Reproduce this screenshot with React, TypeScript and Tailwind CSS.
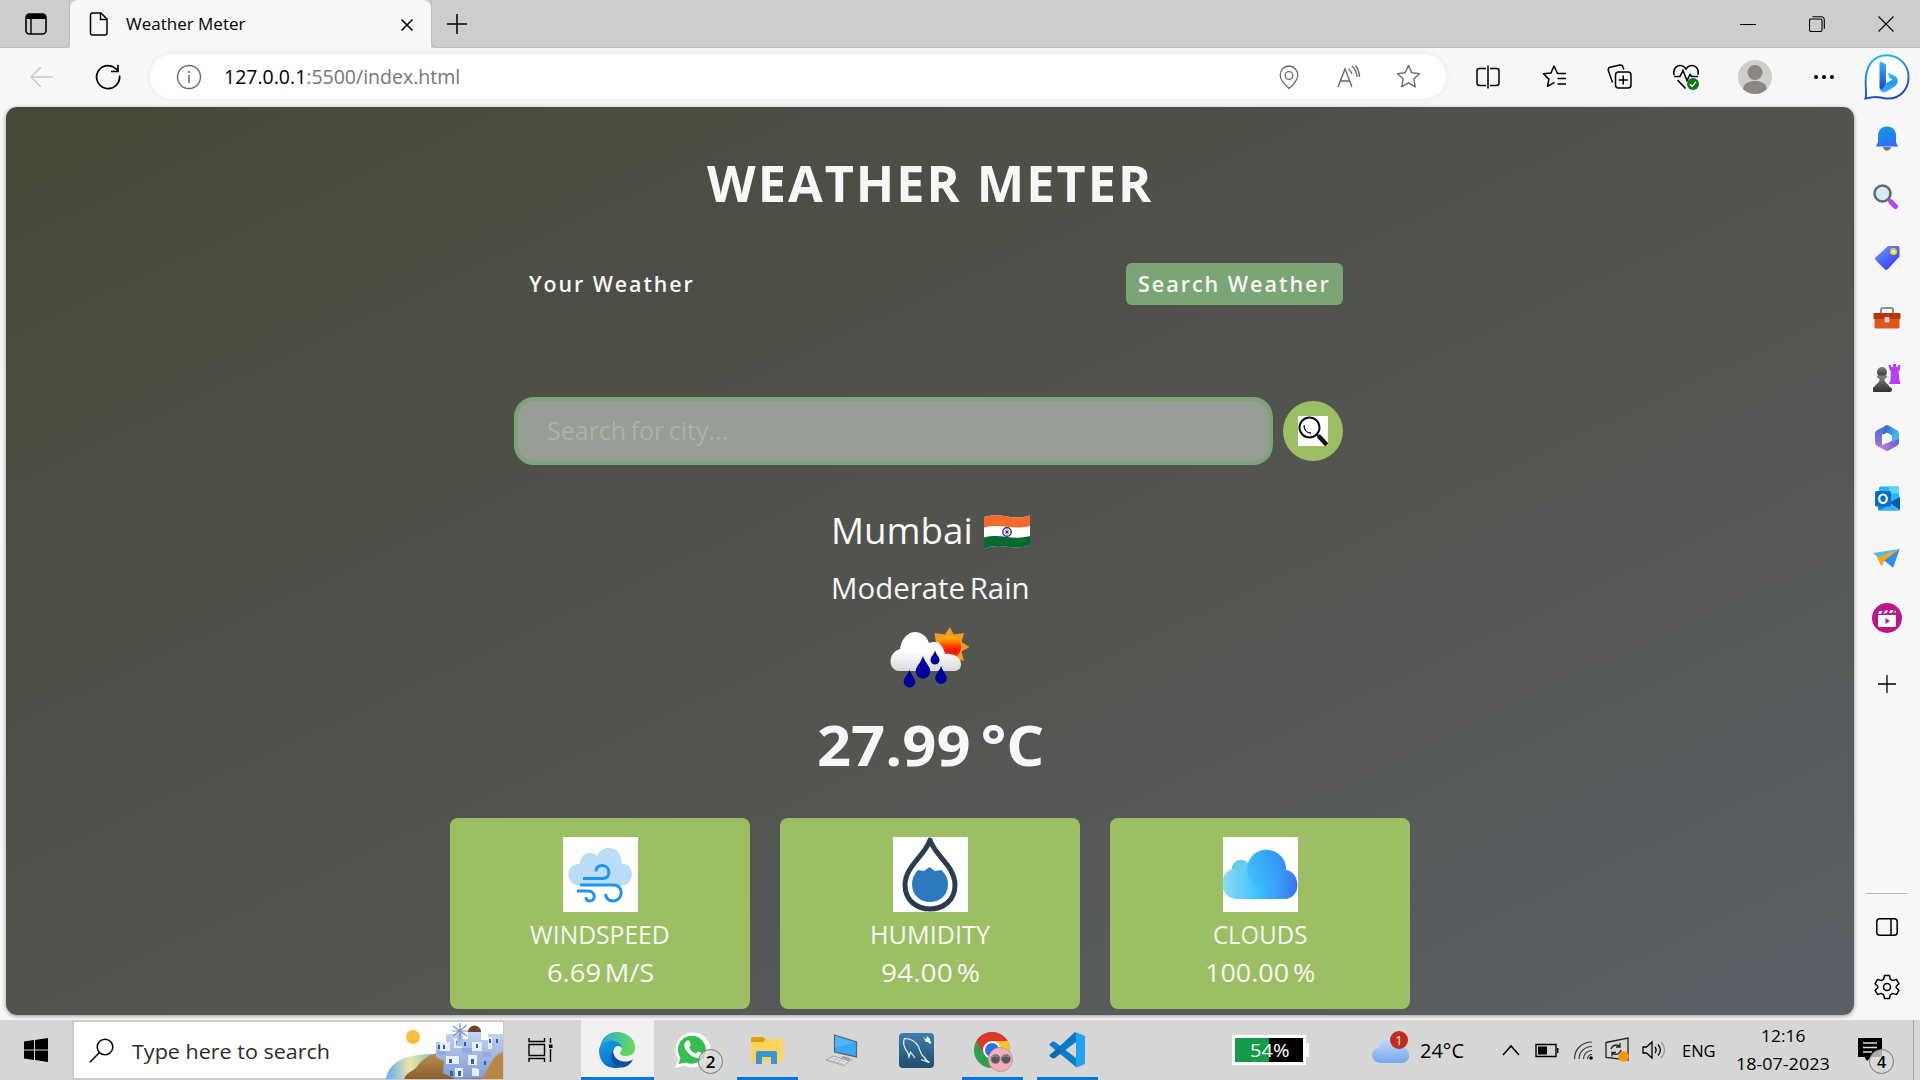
import React, { useLayoutEffect, useRef, useState } from "react";

/** Single line of text stretched horizontally to an exact width. */
function Fit({ w, className = "", children }: { w: number; className?: string; children: React.ReactNode }) {
  const ref = useRef<HTMLSpanElement>(null);
  const [s, setS] = useState(1);
  useLayoutEffect(() => {
    if (ref.current) setS(w / ref.current.offsetWidth);
  }, [w]);
  return (
    <div className={"shrink-0 whitespace-nowrap " + className} style={{ width: w }}>
      <span ref={ref} className="inline-block origin-left" style={{ transform: `scaleX(${s})` }}>
        {children}
      </span>
    </div>
  );
}

type IconProps = { w: number; h?: number; vb: string; className?: string; children: React.ReactNode };
function Svg({ w, h, vb, className = "", children }: IconProps) {
  return (
    <svg width={w} height={h ?? w} viewBox={vb} className={"block shrink-0 " + className} fill="none">
      {children}
    </svg>
  );
}

function Slot({ w, children }: { w: number; children: React.ReactNode }) {
  return (
    <div className="flex h-full shrink-0 items-center justify-center" style={{ width: w }}>
      {children}
    </div>
  );
}

function TabBar() {
  return (
    <div className="flex h-12 shrink-0 bg-[#cdcdcd]">
      <div className="flex w-[70px] items-center justify-center rounded-br-md border-b border-r border-[#bcbcbc] pl-[3px]">
        <Svg w={22} vb="0 0 22 22">
          <rect x="1" y="1" width="20" height="20" rx="3.5" stroke="#000" strokeWidth="1.6" />
          <path d="M1 6V4.5A3.5 3.5 0 0 1 4.500 1h13A3.500 3.500 0 0 1 21 4.500V6z" fill="#000" />
          <path d="M6 6v15" stroke="#000" strokeWidth="1.4" />
        </Svg>
      </div>
      <div className="flex w-[361px] items-center rounded-t-lg bg-[#f7f7f7] pl-[19px]">
        <Svg w={20} h={24} vb="0 0 20 24">
          <path d="M3.500 1H12l6 6v14a2 2 0 0 1-2 2H3.500a2 2 0 0 1-2-2V3a2 2 0 0 1 2-2z" stroke="#000" strokeWidth="1.500" />
          <path d="M11.500 1v6.500H18" stroke="#000" strokeWidth="1.400" />
        </Svg>
        <Fit w={119} className="ml-[17px] font-['Open_Sans'] text-[17px] leading-6 text-black">Weather Meter</Fit>
        <Svg w={14} vb="0 0 14 14" className="ml-[155px] mt-px">
          <path d="M1.500 1.500l11 11M12.500 1.500l-11 11" stroke="#000" strokeWidth="1.600" />
        </Svg>
      </div>
      <div className="flex flex-1 items-center border-b border-l border-[#bcbcbc] rounded-bl-md pl-[14px]">
        <Svg w={22} vb="0 0 22 22">
          <path d="M11 1v20M1 11h20" stroke="#000" strokeWidth="1.500" />
        </Svg>
        <div className="ml-auto flex h-full">
          <Slot w={69}>
            <Svg w={16} vb="0 0 16 16"><path d="M0 8.500h16" stroke="#000" /></Svg>
          </Slot>
          <Slot w={69}>
            <Svg w={16} vb="0 0 16 16">
              <rect x=".5" y="3" width="12.500" height="12.500" rx="1.500" stroke="#000" strokeWidth="1.100" />
              <path d="M3.500 .8h8.800a3 3 0 0 1 3 3v9" stroke="#000" strokeWidth="1.100" />
            </Svg>
          </Slot>
          <Slot w={69}>
            <Svg w={16} vb="0 0 16 16"><path d="M.5.5l15 15M15.500.5l-15 15" stroke="#000" strokeWidth="1.100" /></Svg>
          </Slot>
        </div>
      </div>
    </div>
  );
}

const STAR = "M12 1.500l3.200 6.900 7.300.9-5.400 5.100 1.400 7.500L12 18.200l-6.500 3.700 1.400-7.500L1.500 9.300l7.300-.9z";

function Toolbar() {
  return (
    <div className="flex h-[59px] shrink-0 items-start bg-[#f7f7f7] pt-[6px]">
      <div className="flex h-[45px] items-center">
        <Svg w={25} h={22} vb="0 0 25 22" className="ml-[29px]">
          <path d="M24 11H2M12 1L2 11l10 10" stroke="#c9c9c9" strokeWidth="1.500" />
        </Svg>
        <Svg w={26} vb="0 0 26 26" className="ml-[41px]">
          <path d="M24.500 11.500A11.500 11.500 0 1 1 20.500 4.300L23 6.800" stroke="#000" strokeWidth="1.700" />
          <path d="M23 .8v6.700h-7" stroke="#000" strokeWidth="1.700" />
        </Svg>
      </div>
      <div className="ml-[29px] flex h-[45px] w-[1296px] items-center rounded-full bg-white shadow-[0_0_6px_rgba(0,0,0,0.07)]">
        <Svg w={26} vb="0 0 26 26" className="ml-[26px]">
          <circle cx="13" cy="13" r="11.500" stroke="#6b6b6b" strokeWidth="1.400" />
          <path d="M13 11v8M13 7v2" stroke="#6b6b6b" strokeWidth="1.600" />
        </Svg>
        <Fit w={236} className="ml-[22px] font-['Open_Sans'] text-[20px] leading-7 text-[#777]">
          <span className="text-black">127.0.0.1</span>:5500/index.html
        </Fit>
        <div className="ml-auto mr-[8px] flex h-full">
          <Slot w={61}>
            <Svg w={24} vb="0 0 24 24">
              <path d="M12 1a9 9 0 0 1 8.800 9c0 5-4.800 10-8.800 13.500C8 20 3.200 15 3.200 10A9 9 0 0 1 12 1z" stroke="#6b6b6b" strokeWidth="1.300" />
              <circle cx="12" cy="10.500" r="3.800" stroke="#6b6b6b" strokeWidth="1.300" />
            </Svg>
          </Slot>
          <Slot w={60}>
            <Svg w={24} vb="0 0 24 24">
              <path d="M1 22L8 4l7 18M3.300 16h9.400M15 1a16 16 0 0 1 5 11M18.500.5a20 20 0 0 1 4 11.500M11.500 4a9 9 0 0 1 3.300 5" stroke="#6b6b6b" strokeWidth="1.400" />
            </Svg>
          </Slot>
          <Slot w={59}>
            <Svg w={25} vb="0 0 24 24"><path d={STAR} stroke="#6b6b6b" strokeWidth="1.300" strokeLinejoin="round" /></Svg>
          </Slot>
        </div>
      </div>
      <div className="ml-[9px] flex h-[45px]">
        <Slot w={66}>
          <Svg w={24} vb="0 0 24 24">
            <path d="M10 3.500H3.500a2.500 2.500 0 0 0-2.500 2.500v12a2.500 2.500 0 0 0 2.500 2.500H10M14 3.500h6.500A2.500 2.500 0 0 1 23 6v12a2.500 2.500 0 0 1-2.500 2.500H14M12 .5v23" stroke="#000" strokeWidth="1.500" />
          </Svg>
        </Slot>
        <Slot w={66}>
          <Svg w={25} vb="0 0 25 24">
            <path d="M22 9h-6.500L12 1.500 9 8.400l-7.500.9 5.400 5.300-1.400 7.300 7-4M15.500 14H24M15.500 19.500H24M16 9h8" stroke="#000" strokeWidth="1.500" strokeLinejoin="round" />
          </Svg>
        </Slot>
        <Slot w={65}>
          <Svg w={25} vb="0 0 25 25">
            <path d="M5.500 18.500L1.300 6.500A2.500 2.500 0 0 1 3 3.300L13 1a2.500 2.500 0 0 1 3 2l.7 2.500" stroke="#000" strokeWidth="1.500" />
            <rect x="8.500" y="8" width="15.500" height="16" rx="3" stroke="#000" strokeWidth="1.500" />
            <path d="M16.200 11.500v9M11.700 16h9" stroke="#000" strokeWidth="1.500" />
          </Svg>
        </Slot>
        <Slot w={67}>
          <Svg w={26} vb="0 0 26 26">
            <path d="M1 11C0 5 3 1.500 7 1.500c3 0 4.700 1.500 6 3.500 1.300-2 3-3.500 6-3.500 4 0 7 3.500 6 9M1 12.500h6l3-6 4 10 3-6 1.500 2H25M4.500 16l8 8.500" stroke="#000" strokeWidth="1.600" />
            <circle cx="20" cy="20" r="6" fill="#0e7a0d" />
            <path d="M17 20.300l2.200 2 3.800-4.300" stroke="#fff" strokeWidth="1.300" />
          </Svg>
        </Slot>
        <Slot w={72}>
          <Svg w={34} vb="0 0 34 34">
            <circle cx="17" cy="17" r="17" fill="#d0cecb" />
            <circle cx="17" cy="12.500" r="7.500" fill="#8b8785" />
            <path d="M5 29c1-6 6-8 12-8s11 2 12 8a17 17 0 0 1-24 0z" fill="#8b8785" />
          </Svg>
        </Slot>
        <Slot w={66}>
          <Svg w={20} h={6} vb="0 0 20 6"><circle cx="2" cy="3" r="2" fill="#000" /><circle cx="10" cy="3" r="2" fill="#000" /><circle cx="18" cy="3" r="2" fill="#000" /></Svg>
        </Slot>
        <Slot w={60}>
          <Svg w={46} vb="0 0 46 46">
            <defs>
              <linearGradient id="bo" x1="0" y1="0" x2="0.300" y2="1"><stop stopColor="#23c6f3" /><stop offset="1" stopColor="#1b49cf" /></linearGradient>
              <linearGradient id="bb" x1="0" y1="0" x2="0" y2="1"><stop stopColor="#25cdf0" /><stop offset=".5" stopColor="#2a92f0" /><stop offset="1" stopColor="#3bb4f8" /></linearGradient>
              <linearGradient id="bs" x1="0" y1="0" x2="0" y2="1"><stop stopColor="#3db3fd" /><stop offset="1" stopColor="#1546d2" /></linearGradient>
            </defs>
            <path d="M1.500 44.500c1-3 .5-7 .3-12C.5 15 7 1.200 23 1.200A21.500 21.500 0 0 1 44.500 23c0 14-10 22-21.500 21.500-6-.3-8-2-12-1.500-3 .2-6 1-9.500 1.500z" fill="#fff" stroke="url(#bo)" strokeWidth="2" />
            <path d="M24 18.500l7 3.500c3 1.500 4 6 .5 10l-9.500 6c-3.500 1.500-6.500-1-6.500-5l13-7.500-3-1.500z" fill="url(#bb)" />
            <path d="M15.500 9c0-1 1-1.500 2-1l3 1.500c1 .5 1.500 1 1.500 2V29l-3 5.500c-2 1-3.500 0-3.500-2z" fill="url(#bs)" />
          </Svg>
        </Slot>
      </div>
    </div>
  );
}

function Flag() {
  return (
    <Svg w={46} h={34} vb="0 0 46 34" className="mt-1">
      <defs><clipPath id="fl"><path d="M0 2C8-.5 14 0 23 1.500s16 1 23-1v30c-8 2-15 2.500-23 1.200S8 31 0 33.500z" /></clipPath></defs>
      <g clipPath="url(#fl)">
        <rect width="46" height="34" fill="#fff" />
        <path d="M0 0h46v11c-8 2-15 2-23 .8S8 10.500 0 12.500z" fill="#f4692c" />
        <path d="M0 22.500c8-2 15-1.800 23-.5s15 1 23-1V34H0z" fill="#046a31" />
      </g>
      <circle cx="23" cy="17" r="4.300" stroke="#28246f" strokeWidth="1.200" />
      <path d="M23 13v8M19 17h8M20 14l6 6M26 14l-6 6" stroke="#28246f" strokeWidth=".5" />
      <circle cx="23" cy="17" r="1.200" fill="#28246f" />
    </Svg>
  );
}

function RainIcon() {
  const drop = (x: number, y: number, r: number) => (
    <path d={`M${x} ${y}c${r * 0.3} ${r} ${r} ${r * 1.4} ${r} ${r * 2.1}a${r} ${r} 0 0 1 ${-2 * r} 0c0 ${-r * 0.7} ${r * 0.7} ${-r * 1.1} ${r} ${-r * 2.1}z`} fill="#00009c" />
  );
  return (
    <Svg w={80} h={61} vb="0 0 80 61">
      <defs>
        <linearGradient id="cl" x1="0" y1="0" x2="0" y2="1"><stop offset=".5" stopColor="#fff" /><stop offset="1" stopColor="#d9d9d9" /></linearGradient>
        <linearGradient id="sn" x1="0" y1="0" x2="0" y2="1"><stop stopColor="#ffc400" /><stop offset=".6" stopColor="#ff1a00" /></linearGradient>
      </defs>
      <path d="M60 0l3.500 7.500L74 6l-2.500 9 8 5-8 4.500L74 34l-8-2-20-16-1.500-10 10.500 1.500z" fill="#f79b1e" />
      <circle cx="60" cy="20" r="11" fill="url(#sn)" />
      <path d="M9 44c-11-1-12-18 1-22C12 9 20 5 25 5c6 0 12 4 14 11 8-3 14 1 16 11 8-1 16 3 16 10 0 5-3 7-7 7z" fill="url(#cl)" />
      {drop(33, 29, 7.300)}{drop(19.500, 42.500, 5.800)}{drop(45, 23.500, 4.500)}{drop(51, 39, 5.800)}
    </Svg>
  );
}

function WindIcon() {
  return (
    <Svg w={75} vb="0 0 75 75" className="bg-white">
      <path d="M18 49C2 49 1 26 17 27c0-10 10-15 17-8 6-13 25-10 25 8 13-2 14 22-2 22z" fill="#badefa" />
      <path d="M20 41.500h20c8 0 8-13-1-13-4 0-6 2-6 6M17 48h33c12 0 10 16 0 16-5 0-7-3-7.500-7M14 54h11c8 0 8 10 2 10-3 0-4-2-4-4" stroke="#1f94f1" strokeWidth="3" />
    </Svg>
  );
}
function DropIcon() {
  return (
    <Svg w={75} vb="0 0 75 75" className="bg-white">
      <path d="M37 3C32 19 12 29 12 48c0 32 50 32 50 0C62 29 42 19 37 3z" stroke="#293d4f" strokeWidth="5" strokeLinejoin="round" />
      <path d="M25 33l6 1 5.500-4 5.500 4 6-1c5 4 7 9 7 14 0 24-36 24-36 0 0-5 2-10 6-14z" fill="#2c79bd" />
    </Svg>
  );
}
function CloudIcon() {
  return (
    <Svg w={75} vb="0 0 75 75" className="bg-white">
      <defs>
        <linearGradient id="cg"><stop stopColor="#91dcf4" /><stop offset=".5" stopColor="#3bc0fd" /><stop offset="1" stopColor="#3d73ed" /></linearGradient>
        <linearGradient id="ch" x1="0" y1="1" x2="1" y2="0"><stop stopColor="#3bc0fd" /><stop offset="1" stopColor="#2f86ee" /></linearGradient>
      </defs>
      <path d="M15 62a15.500 15.500 0 0 1-6-30c0-9 10-12 16-6a19.500 19.500 0 0 1 38 7c15 2 16 29-2 29z" fill="url(#cg)" />
      <path d="M9 32c0-9 10-12 16-6-2 5-2 10-1 14-3-6-8-8-15-8z" fill="#62cdf2" />
      <circle cx="43.500" cy="33" r="19.500" fill="url(#ch)" opacity=".55" />
    </Svg>
  );
}

function Card({ icon, label, lw, value, vw }: { icon: React.ReactNode; label: string; lw: number; value: string; vw: number }) {
  return (
    <div className="flex h-[191px] w-[300px] flex-col items-center rounded-lg bg-[#9dbf63] pt-[19px] font-['Open_Sans'] text-[25px] font-normal text-[#f9f6f7]">
      {icon}
      <Fit w={lw} className="mt-[3px] h-[38px] leading-[38px]">{label}</Fit>
      <Fit w={vw} className="h-[38px] leading-[38px] [word-spacing:-3px]">{value}</Fit>
    </div>
  );
}

function WeatherPage() {
  return (
    <div className="flex w-[1848px] flex-col items-center overflow-hidden rounded-[11px] bg-[linear-gradient(155deg,#474737_0%,#4f5049_35%,#545652_60%,#5c5f66_100%)] font-['Open_Sans'] text-[#f9f6f7] shadow-[0_1px_4px_rgba(0,0,0,0.4)]">
      <Fit w={446} className="mr-px mt-[41px] h-[70px] text-[50px] font-bold leading-[70px] tracking-[2px]">WEATHER METER</Fit>
      <div className="mr-[3px] mt-[45px] flex h-[42px] w-[829px] items-center justify-between pl-[15px]">
        <Fit w={166} className="pb-[2px] text-[22px] font-semibold leading-[40px] tracking-[2px]">Your Weather</Fit>
        <div className="flex h-[42px] w-[217px] items-center rounded-md bg-[#7ba576] pl-3">
          <Fit w={193} className="pb-[2px] text-[22px] font-semibold leading-[40px] tracking-[2px]">Search Weather</Fit>
        </div>
      </div>
      <div className="mr-[3px] mt-[92px] flex w-[829px] items-center justify-between">
        <div className="flex h-[68px] w-[759px] items-center rounded-[20px] border-4 border-[#7ba576] bg-[#989d95] pl-[29px]">
          <Fit w={181} className="pb-[2px] text-[25px] leading-[58px] text-[#acb2aa] [word-spacing:-2px]">Search for city...</Fit>
        </div>
        <div className="flex size-[60px] items-center justify-center rounded-full bg-[#9dbf63]">
          <Svg w={30} vb="0 0 30 30" className="bg-white">
            <circle cx="11.500" cy="11.500" r="10" stroke="#111" strokeWidth="2" />
            <path d="M6 9c0 5 3 8 7 8" stroke="#111" strokeWidth="1.300" />
            <path d="M19 18.500l2.500 2.500" stroke="#111" strokeWidth="2" />
            <path d="M21.500 21l6 6.500" stroke="#111" strokeWidth="4.500" strokeLinecap="round" />
          </Svg>
        </div>
      </div>
      <div className="mt-[40px] flex h-[50px] w-[199px] items-center justify-between">
        <Fit w={142} className="text-[37px] font-normal leading-[50px]">Mumbai</Fit>
        <Flag />
      </div>
      <Fit w={199} className="mt-[12px] h-[42px] text-[30px] font-normal leading-[42px] [word-spacing:-3px]">Moderate Rain</Fit>
      <div className="mt-[18px]"><RainIcon /></div>
      <Fit w={227} className="mt-[18px] h-[76px] text-[56px] font-bold leading-[76px] [word-spacing:-5px]">27.99 °C</Fit>
      <div className="mt-[36px] flex gap-[30px]">
        <Card icon={<WindIcon />} label="WINDSPEED" lw={140} value="6.69 M/S" vw={107} />
        <Card icon={<DropIcon />} label="HUMIDITY" lw={120} value="94.00 %" vw={99} />
        <Card icon={<CloudIcon />} label="CLOUDS" lw={94} value="100.00 %" vw={110} />
      </div>
    </div>
  );
}

function SideItem({ children }: { children: React.ReactNode }) {
  return <div className="flex h-[60px] shrink-0 items-center justify-center">{children}</div>;
}

function Sidebar() {
  return (
    <div className="-mb-[2px] flex w-[66px] flex-col pt-px">
      <SideItem>
        <Svg w={22} h={26} vb="0 0 22 26" className="mt-[2px]">
          <defs><linearGradient id="be" x1="0" y1="0" x2="0.500" y2="1"><stop stopColor="#0fa5da" /><stop offset="1" stopColor="#2f6df5" /></linearGradient></defs>
          <path d="M7 21h8c-1 5-7 5-8 0z" fill="#70777d" />
          <path d="M11 .5c6 0 9 4 9 9V16l2 4.500H0L2 16V9.500c0-5 3-9 9-9z" fill="url(#be)" />
        </Svg>
      </SideItem>
      <SideItem>
        <Svg w={25} vb="0 0 25 25" className="mb-[3px] mr-[3px]">
          <circle cx="9.500" cy="9.500" r="8" fill="#d3edfb" stroke="#68696b" strokeWidth="2.600" />
          <path d="M15 15l3 3" stroke="#777" strokeWidth="3" />
          <path d="M18 18l4.500 4.500" stroke="#bd42f5" strokeWidth="5" strokeLinecap="round" />
        </Svg>
      </SideItem>
      <SideItem>
        <Svg w={25} vb="0 0 25 25" className="mb-px">
          <defs><linearGradient id="tg" x1="0" y1="0" x2="0.800" y2="1"><stop stopColor="#62a6ff" /><stop offset="1" stopColor="#3733f8" /></linearGradient></defs>
          <path d="M13 1h9.500A2 2 0 0 1 24.500 3v8.500L13 24a2.500 2.500 0 0 1-3.500 0L1 15.500A2.500 2.500 0 0 1 1 12z" fill="url(#tg)" />
          <circle cx="18.500" cy="6.500" r="2.500" stroke="#fccb22" strokeWidth="2" fill="#fff" />
        </Svg>
      </SideItem>
      <SideItem>
        <Svg w={28} h={22} vb="0 0 28 22">
          <path d="M8 7V3a2 2 0 0 1 2-2h8a2 2 0 0 1 2 2v4" stroke="#8c9095" strokeWidth="2" />
          <rect x="1.500" y="9" width="25" height="12.500" rx="1.500" fill="#e2551a" />
          <rect x=".5" y="6" width="27" height="6" rx="1" fill="#b83607" />
          <rect x="11.500" y="10" width="5" height="5.500" rx="1" fill="#cdd0d3" />
        </Svg>
      </SideItem>
      <SideItem>
        <Svg w={28} vb="0 0 28 28">
          <defs><linearGradient id="pn" x1="0" y1="0" x2="0" y2="1"><stop stopColor="#858585" /><stop offset="1" stopColor="#2f2f2f" /></linearGradient></defs>
          <path d="M15.500 1h2.500v2h2V0h3v3h2V1h2.500l-1 6h-1l1 9 1 4H16l1.500-4 .5-9h-1z" fill="#b83df5" />
          <circle cx="9" cy="8" r="5" fill="url(#pn)" />
          <path d="M4 11.500h10c1 3-2 3-2.500 3.500 0 5 5 5 5 8.500H1.500c0-3.500 5-3.500 5-8.500C6 14.500 3 14.500 4 11.500zM1.500 23h15a2 2 0 0 1 0 5h-15a2 2 0 0 1 0-5z" fill="url(#pn)" />
        </Svg>
      </SideItem>
      <SideItem>
        <Svg w={24} h={26} vb="0 0 24 26">
          <defs>
            <linearGradient id="m1"><stop stopColor="#2f5cc4" /><stop offset="1" stopColor="#45bdee" /></linearGradient>
            <linearGradient id="m2"><stop stopColor="#b98be0" /><stop offset="1" stopColor="#7257c9" /></linearGradient>
            <linearGradient id="m3" x1="0" y1="0" x2="0" y2="1"><stop stopColor="#3f6fd0" /><stop offset="1" stopColor="#a07adb" /></linearGradient>
          </defs>
          <path d="M10 .7a4 4 0 0 1 4 0l8 4.600a4 4 0 0 1 2 3.400V13L7 9z" fill="url(#m1)" />
          <path d="M11 0.500L2 5.300A4 4 0 0 0 0 8.700v8.600a4 4 0 0 0 2 3.400l5 2.800V9.500z" fill="url(#m3)" />
          <path d="M24 11v6.300a4 4 0 0 1-2 3.400l-8 4.600a4 4 0 0 1-4 0l-6-3.500L17 15z" fill="url(#m2)" />
          <path d="M24 8.700V14l-7 3V9z" fill="#41b4ea" />
          <path d="M12 8L16.300 10.500v5L12 18l-4.300-2.500v-5z" fill="#f7f7f7" stroke="#f7f7f7" strokeLinejoin="round" />
        </Svg>
      </SideItem>
      <SideItem>
        <Svg w={25} vb="0 0 25 25">
          <rect x="4" y=".5" width="20" height="15" rx="1.500" fill="#2ab4ee" />
          <path d="M14 .5h10v7H14z" fill="#5fd5fa" />
          <path d="M3 11l11 6 11-6v12a1.500 1.500 0 0 1-1.500 1.500H4.500A1.500 1.500 0 0 1 3 23z" fill="#1687d9" />
          <path d="M25 11v13L14 17z" fill="#0b5aa8" />
          <path d="M5 24.500l11-7 9 6.500z" fill="#32b7f2" />
          <rect y="5" width="16" height="15.500" rx="1.500" fill="#0a6dca" />
          <ellipse cx="8" cy="12.700" rx="3.800" ry="4.200" stroke="#fff" strokeWidth="2.200" />
        </Svg>
      </SideItem>
      <SideItem>
        <Svg w={27} h={19} vb="0 0 27 19" className="mr-[2px]">
          <path d="M0 4L26.500 0 8 11z" fill="#50bcf1" />
          <path d="M26.500 0L13 12l7 6.500z" fill="#2676ee" />
          <path d="M26.500 0L9 10l11 8.500 6-17z" fill="#2f8ef3" />
          <path d="M26.500 0L4 8.500l4.500 9L12 11z" fill="#f5a81b" />
        </Svg>
      </SideItem>
      <SideItem>
        <Svg w={30} vb="0 0 30 30">
          <circle cx="15" cy="15" r="15" fill="#bb168a" />
          <path d="M6 12h18v10.500a1.500 1.500 0 0 1-1.500 1.500h-15A1.500 1.500 0 0 1 6 22.500z" fill="#fff" />
          <path d="M6 11l1.500-3h3L9 11zM11.500 10.500l1.500-3h3l-1.500 3zM17 10l1.500-3h3L20 10zM22 9.500L23.500 7 24 9.500z" fill="#fff" />
          <path d="M13.500 15l4.500 3-4.500 3z" fill="#bb168a" />
        </Svg>
      </SideItem>
      <div className="mt-[6px] flex h-[60px] items-center justify-center">
        <Svg w={18} vb="0 0 18 18" className="mr-px"><path d="M9 0v18M0 9h18" stroke="#000" strokeWidth="1.300" /></Svg>
      </div>
      <div className="mt-auto flex flex-col items-center">
        <div className="h-px w-[42px] bg-[#b8b8b8]" />
        <div className="mt-[3px]">
          <SideItem>
            <Svg w={22} h={18} vb="0 0 22 18">
              <rect x=".8" y=".8" width="20.400" height="16.400" rx="3" stroke="#000" strokeWidth="1.500" />
              <path d="M15 1v16" stroke="#000" strokeWidth="1.500" />
            </Svg>
          </SideItem>
        </div>
        <SideItem>
          <Svg w={26} vb="0 0 26 26">
            <path d="M10.500 1.500h5l.8 3.700 2.500 1.400 3.600-1.200 2.500 4.300-2.700 2.600v1.400l2.700 2.600-2.500 4.300-3.600-1.200-2.500 1.400-.8 3.700h-5l-.8-3.700-2.500-1.400-3.600 1.200-2.500-4.300 2.700-2.600v-1.400L1.100 9.700l2.500-4.300 3.600 1.200 2.500-1.400z" stroke="#000" strokeWidth="1.500" strokeLinejoin="round" />
            <circle cx="13" cy="13" r="3.500" stroke="#000" strokeWidth="1.500" />
          </Svg>
        </SideItem>
      </div>
    </div>
  );
}

function Village() {
  return (
    <Svg w={119} h={57} vb="0 0 119 57">
      <defs>
        <linearGradient id="sea"><stop stopColor="#58aef8" /><stop offset=".5" stopColor="#f3e3a8" /><stop offset="1" stopColor="#70c8bd" /></linearGradient>
        <linearGradient id="hl" x1="0" y1="0" x2="0" y2="1"><stop stopColor="#c99c5f" /><stop offset="1" stopColor="#895f2e" /></linearGradient>
        <linearGradient id="hs" x1="0" y1="0" x2="0" y2="1"><stop stopColor="#c5d4f3" /><stop offset="1" stopColor="#7f9bd6" /></linearGradient>
      </defs>
      <circle cx="29" cy="15" r="7" fill="#fdbd3a" />
      <path d="M2 57c3-18 20-25 48-25v25z" fill="url(#sea)" />
      <path d="M20 57c4-9 10-7 15-15 6-7 13-10 18-11l14-3 52-5v34z" fill="url(#hl)" />
      <path d="M52 20h10v-8h14v5h8V9h13v9h7v-6h15v18l-10 9-3 17-35 1-12-6 1-12-8-4z" fill="url(#hs)" />
      <path d="M56 20h10v9H56zM70 16h8v10h-8zM88 20h10v9H88zM62 34h13v8H62zM84 33h9v10h-9zM71 46h8v9h-8zM104 15h4v12h-4zM88 46h7v8h-7z" fill="#e6edfb" />
      <path d="M53 29h9v4h-9zM78 26h10v5H78zM98 30h9v5h-9zM66 43h15v3H66zM93 43h8v4h-8z" fill="#92aae0" />
      <path d="M54 23h2v4h-2zM59 23h2v4h-2zM65 37h3v4h-3zM72 19h2v4h-2zM80 20h2v4h-2zM87 37h3v5h-3zM74 49h3v5h-3zM66 49h3v5h-3zM92 22h2v4h-2zM105 17h2v4h-2zM112 17h2v4h-2zM100 39h2v4h-2z" fill="#3d5d9f" />
      <path d="M84 10a6.500 6.500 0 0 1 13 0z" fill="#6f4333" />
      <path d="M74 11l4-1 2 14h-8z" fill="#a8bce8" />
      <path d="M76 1v16M69 4l14 10M83 3L69 14M68 9h16" stroke="#7f93bd" strokeWidth="1.200" />
      <path d="M119 30c-9 2-12 12-16 18l-5 9h21z" fill="#b98846" />
    </Svg>
  );
}

function Task({ w, active = false, tile = false, children }: { w: number; active?: boolean; tile?: boolean; children: React.ReactNode }) {
  return (
    <div className={"relative flex h-[60px] shrink-0 items-center justify-center " + (tile ? "bg-[#f0f0f0]" : "")} style={{ width: w }}>
      {children}
      {active && <div className="absolute inset-x-0 bottom-0 h-[3px] bg-[#0078d7]" />}
    </div>
  );
}

function Taskbar() {
  return (
    <div className="flex h-[60px] shrink-0 items-center overflow-hidden bg-[#d6d6d6] font-['Open_Sans'] text-black">
      <Svg w={24} h={24} vb="0 0 24 24" className="ml-[24px]">
        <path d="M0 3.500L10 2v9.500H0zM11 1.900L24 0v11.500H11zM0 12.500h10V22L0 20.500zM11 12.500h13V24l-13-1.900z" fill="#000" />
      </Svg>
      <div className="ml-[24px] flex h-[60px] w-[432px] items-center border-2 border-r-[1px] border-[#cacaca] bg-white pl-[15px]">
        <Svg w={25} vb="0 0 25 25">
          <circle cx="16" cy="9" r="7.800" stroke="#000" strokeWidth="1.500" />
          <path d="M10.500 14.500L.8 24.200" stroke="#000" strokeWidth="1.500" />
        </Svg>
        <Fit w={198} className="ml-[18px] mt-[4px] text-[20px] leading-7 text-[#2b2b2b]">Type here to search</Fit>
        <div className="ml-auto"><Village /></div>
      </div>
      <Svg w={26} h={24} vb="0 0 26 24" className="ml-[24px] mr-[27px]">
        <path d="M1 0v3.500h15.500V0M1 24v-3.500h15.500V24M1 6.500h15.500v11H1zM22.500 0v5M22.500 11v13" stroke="#000" strokeWidth="1.400" />
        <path d="M21 6.500h3.500V10H21z" fill="#000" />
      </Svg>
      <Task w={73} active tile>
        <Svg w={36} vb="0 0 36 36" className="-ml-px">
          <defs>
            <linearGradient id="e1"><stop stopColor="#2aa6e2" /><stop offset="1" stopColor="#67dd55" /></linearGradient>
            <linearGradient id="e2" x1="0" y1="0" x2="0.500" y2="1"><stop stopColor="#1ba1e3" /><stop offset="1" stopColor="#0669ca" /></linearGradient>
          </defs>
          <path d="M1 16C2 6 9 0 18 0c10 0 18 7 18 15 0 6-4 9-9 9-4 0-6-1-6-2.500 0-1 2-2 2-5C23 12 18 9 13 9 7 9 3 12 1 16z" fill="url(#e1)" />
          <path d="M0 18c1-6 6-9.500 12-9.500 7 0 11 4 11 8-2-2.500-8-1-9 4-1 7 5 13 12 13-8 5-26 4-26-15.500z" fill="url(#e2)" />
          <path d="M15 16.500c-5 6-3 18 8 19 5 0 9-4 11-8-7 4-17 2-19-5-.5-2 0-4 0-6z" fill="#12519f" />
          <path d="M16 15.500c-3 3-2 8 2 10 6 3 11 1 14-3-5 2-11 1-11-1 0-1 2-2 2-4 0-3-4-5-7-2z" fill="#eee" />
          <path d="M23 16c0 3-2 4-2 5 0 2 3 3 6 3 5 0 9-3 9-8-3 2-9 2-13 0z" fill="#5bd65d" />
        </Svg>
      </Task>
      <Task w={76}>
        <Svg w={36} vb="0 0 36 36" className="ml-[2px]">
          <path d="M0 36l3-9A17.500 17.500 0 1 1 10 33.500z" fill="#fff" />
          <path d="M3.500 32l2-6A14 14 0 1 1 11 30.500z" fill="#34bd50" />
          <path d="M11.500 9c1.500-1 2.500-1 3 .3l1.200 3c.5 1.200-1.500 2.400-1.500 3.200 1 2.500 3.500 5 6.500 6 1 0 2-2.300 3-2l3.500 1.700c1.500 1.300-1 4.800-4 4.800-7 0-14-8-14-13 0-2 1-3 2.300-4z" fill="#fff" />
        </Svg>
        <div className="absolute left-[44px] top-[29px] flex size-[25px] items-center justify-center rounded-full border border-[#777] bg-[#d9d9d9]/80 text-[17px] font-semibold leading-none">2</div>
      </Task>
      <div className="ml-[7px]">
        <Task w={61} active>
          <Svg w={32} h={27} vb="0 0 32 27" className="-ml-px">
            <path d="M0 2a2 2 0 0 1 2-2h10l3 2.500H31A1 1 0 0 1 32 4v20H0z" fill="#dda000" />
            <path d="M0 5h12l3-3h16a1 1 0 0 1 1 1v22H1a1 1 0 0 1-1-1z" fill="#ffd45c" />
            <path d="M5 27V16a2 2 0 0 1 2-2h17a2 2 0 0 1 2 2v11h-6v-7h-9v7z" fill="#3b94d9" />
          </Svg>
        </Task>
      </div>
      <div className="ml-[14px]">
        <Task w={60}>
          <Svg w={32} vb="0 0 32 32">
            <path d="M8.500 1l22 7v15l-22-5z" fill="#36a9f7" stroke="#59656f" strokeWidth="1.300" />
            <path d="M9 2l20 6.500L9 14z" fill="#77c9ff" opacity=".4" />
            <path d="M17 22l7 2v2l4-2-3 3-10-3z" fill="#9ba2a8" />
            <path d="M0 26l7-4 16 5-5 4.500z" fill="#e4e7ea" stroke="#9ba2a8" />
            <path d="M3 26l14 4M5 24l14 4M6 28l6-4M11 29l5-4" stroke="#a7aeb4" strokeWidth=".7" />
          </Svg>
        </Task>
      </div>
      <div className="ml-[27px]">
        <Svg w={35} vb="0 0 35 35">
          <defs><linearGradient id="my" x1="0" y1="0" x2="0" y2="1"><stop stopColor="#3f7fab" /><stop offset="1" stopColor="#1f4d6d" /></linearGradient></defs>
          <rect width="35" height="35" rx="4" fill="url(#my)" />
          <path d="M9 20C4 13 4 8 5.500 5.500c6 0 11 3 14 8 2 5 2 8 5 10 2 2 3 3 2 3l4 3M9 20l1 4 1.500-5L16 25M22 26.500l8 3" stroke="#e7f1f7" strokeWidth="1.200" />
          <path d="M24 4l3 2.500L28 3l3 3v2l1.500 1.500L31 11l-2-2h-2z" fill="#fff" />
        </Svg>
      </div>
      <div className="ml-[28px]">
        <Task w={61} active>
          <Svg w={36} vb="0 0 36 36" className="-ml-px">
            <circle cx="18" cy="18" r="18" fill="#2e9f4c" />
            <path d="M18 18L2.500 9A18 18 0 0 1 33.500 9z" fill="#e0372c" />
            <path d="M18 9h15.500A18 18 0 0 1 18 36l8-14z" fill="#fbc221" />
            <path d="M2.500 9l8 14L18 9z" fill="#e0372c" />
            <circle cx="18" cy="18" r="9" fill="#fff" /><circle cx="18" cy="18" r="7" fill="#2b72e5" />
          </Svg>
          <div className="absolute left-[26px] top-[27px]">
            <Svg w={25} vb="0 0 25 25">
              <circle cx="12.500" cy="12.500" r="12" fill="#f2aebd" stroke="#cb93a1" />
              <circle cx="7.500" cy="12" r="4.600" fill="#5c5557" stroke="#9d8288" /><circle cx="18" cy="12" r="4.600" fill="#5c5557" stroke="#9d8288" />
              <path d="M4 10c3-2 4-1 6 0M15 10c2-2 4-1 6 0" stroke="#aaa" />
            </Svg>
          </div>
        </Task>
      </div>
      <div className="ml-[14px]">
        <Task w={61} active>
          <Svg w={36} vb="0 0 36 36" className="-ml-px">
            <path d="M1 11.500l2-1.500c1-.6 2-.6 3 0L27 26v9L1 13.500c-.6-.7-.6-1.300 0-2z" fill="#0f7dc8" />
            <path d="M1 24.500l2 1.500c1 .6 2 .6 3 0L27 9.500V1L1 22.500c-.6.700-.6 1.300 0 2z" fill="#0a69b5" />
            <path d="M26 0l9 3.500c.6.300 1 1 1 1.500v26c0 .8-.4 1.200-1 1.500L26 36c2-1 1-2 1-3V3c0-1 .5-2-1-3z" fill="#23a2f2" />
            <path d="M26 0L11 14l-1 1 2 6L27 10V1z" fill="#0879c9" />
          </Svg>
        </Task>
      </div>

      <div className="ml-auto flex items-center">
        <div className="relative flex h-[30px] w-[74px] items-center justify-center border-[3px] border-white bg-[linear-gradient(90deg,#159b48_50%,#000_50%)] text-white">
          <Fit w={39} className="text-[19px] leading-6">54%</Fit>
          <div className="absolute -right-[6px] top-[5px] h-[14px] w-[3px] bg-white" />
        </div>
        <div className="relative ml-[66px]">
          <Svg w={38} h={30} vb="0 0 38 30">
            <defs><linearGradient id="tc" x1="0" y1="0" x2="0" y2="1"><stop stopColor="#c2dafd" /><stop offset="1" stopColor="#78a7ed" /></linearGradient></defs>
            <path d="M9 28c-11 0-12-14-2-15C8 1 23 1 26 11c14 0 15 17 3 17z" fill="url(#tc)" />
          </Svg>
          <div className="absolute -top-[4px] left-[18px] flex size-[18px] items-center justify-center rounded-full bg-[#c42b1c] text-[13px] leading-none text-white">1</div>
        </div>
        <Fit w={44} className="ml-[10px] mt-[2px] text-[20px] leading-7">24°C</Fit>
        <Svg w={18} h={12} vb="0 0 18 12" className="ml-[38px]"><path d="M1 11l8-9 8 9" stroke="#000" strokeWidth="1.500" /></Svg>
        <Svg w={24} h={15} vb="0 0 24 15" className="ml-[15px]">
          <path d="M1 1.500h20v12H1z" stroke="#000" strokeWidth="1.400" /><path d="M3 3.500h9v8H3zM22 5h1.500v5H22z" fill="#000" />
        </Svg>
        <Svg w={20} vb="0 0 20 20" className="ml-[14px]">
          <path d="M1.500 19C1.500 9 9 2 19 2M6 19c0-7 5.500-12.500 13-12.500M10.500 19c0-5 3.500-8.500 8.500-8.500M14.500 19c0-2.500 2-4.500 4.500-4.500" stroke="#333" strokeWidth="1.200" />
          <circle cx="18" cy="18" r="1.800" fill="#000" />
        </Svg>
        <Svg w={24} h={26} vb="0 0 24 26" className="ml-[12px]">
          <path d="M1 5.500L23 1v22L1 20.500z" stroke="#222" strokeWidth="1.300" />
          <path d="M6 12a5.500 5.500 0 0 1 9-2.500M15 6v4h-4M16 13a5.500 5.500 0 0 1-9 3M7 19.500v-4h4" stroke="#222" strokeWidth="1.300" />
          <circle cx="18.500" cy="19.500" r="5.300" fill="#ff9700" />
        </Svg>
        <Svg w={24} h={20} vb="0 0 24 20" className="ml-[13px]">
          <path d="M1 7h3.500L10 2v16l-5.500-5H1z" stroke="#000" strokeWidth="1.300" />
          <path d="M13 7c1.500 2 1.500 4 0 6M16 4.500c3 3.500 3 7.500 0 11" stroke="#000" strokeWidth="1.300" />
          <path d="M19 2c4.500 5 4.500 11 0 16" stroke="#999" strokeWidth="1.300" />
        </Svg>
        <Fit w={34} className="ml-[16px] mt-px text-[17px] leading-6">ENG</Fit>
        <div className="ml-[20px] flex w-[94px] flex-col items-center text-[17px] leading-[28px]">
          <Fit w={44}>12:16</Fit>
          <Fit w={94}>18-07-2023</Fit>
        </div>
        <div className="relative ml-[28px] mr-[31px]">
          <Svg w={24} h={24} vb="0 0 24 24">
            <path d="M0 0h24v19H13l-4 4-2.500-4H0z" fill="#000" />
            <path d="M5 5h14M5 9.500h14M5 14h9" stroke="#ddd" strokeWidth="1.300" />
          </Svg>
          <div className="absolute left-[11px] top-[11px] flex size-[25px] items-center justify-center rounded-full border border-[#777] bg-[#d9d9d9]/80 text-[16px] font-semibold leading-none">4</div>
        </div>
        <div className="h-[60px] w-[7px] border-l border-[#a5a5a5]" />
      </div>
    </div>
  );
}

export default function App() {
  return (
    <div className="flex h-[1080px] w-[1920px] flex-col overflow-hidden bg-[#f7f7f7]">
      <TabBar />
      <Toolbar />
      <div className="flex h-[913px] shrink-0 bg-[#f7f7f7] pb-[5px] pl-[6px]">
        <WeatherPage />
        <Sidebar />
      </div>
      <Taskbar />
    </div>
  );
}
